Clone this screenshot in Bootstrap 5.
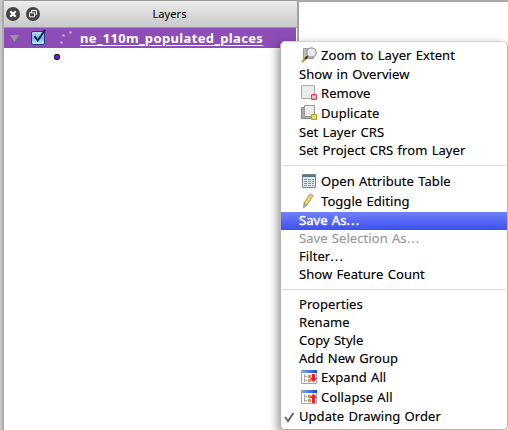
<!DOCTYPE html>
<html lang="en">
<head>
<meta charset="utf-8">
<meta name="viewport" content="width=device-width, initial-scale=1">
<title>Layers</title>
<link href="https://cdn.jsdelivr.net/npm/bootstrap@5.3.0/dist/css/bootstrap.min.css" rel="stylesheet">
<style>
body{width:508px;height:430px;font:13px/18px "Noto Sans","Open Sans",sans-serif;color:#000;background:#fff}
.edge{width:4px;background:linear-gradient(90deg,#c6c6c6 2px,#acacac 2px)}
.layers{width:295px;border-right:2px solid #a2a2a2}
.layers-head{height:28px;border-top:1px solid #999;border-bottom:1px solid #999;background:linear-gradient(#ececec,#c9c9c9);font-size:11.2px}
.head-tools{width:42px;padding-left:2px;gap:6px}
.head-title{padding-right:4px}
.layer-row{height:20px;width:292px;background:#8d4db7;color:#fff;font-weight:700;padding-left:4px}
.layer-row span{letter-spacing:.37px;line-height:17px;text-decoration:underline;text-underline-offset:2px;text-decoration-thickness:1px}
.top-rule{border-top:2px solid #aaa}
.ctx{left:280px;top:41px;width:228px;height:389px;background:#fff;border:1px solid #b4b4b4;border-top-color:#d6d6d6;border-radius:5px;box-shadow:-3px 3px 9px rgba(0,0,0,.38);padding:4px 0}
.item{height:18px;padding-left:18px;line-height:17px;letter-spacing:.06px;word-spacing:.8px;-webkit-text-stroke:.15px}
.item svg{width:18px;height:18px;margin-right:4px;flex:none}
.with-icon{height:20px;line-height:19px}
.dots{letter-spacing:1.1px}
.chosen{background:linear-gradient(#7181f8,#3c50f0);color:#fff;-webkit-text-stroke:.4px #fff}
.dimmed{color:#999}
.rule{height:12px;padding:5px 1px 0}
.rule div{height:1px;background:#dcdcdc}
.checked{padding-left:1px}
.checked svg{margin-right:-1px}
</style>
</head>
<body class="position-relative overflow-hidden">
<svg width="0" height="0" class="position-absolute"><defs>
<linearGradient id="blue" x2="0" y2="1"><stop stop-color="#c3daf4"/><stop offset=".5" stop-color="#76b1ec"/><stop offset="1" stop-color="#b9f2ff"/></linearGradient>
<linearGradient id="bar"><stop stop-color="#7eb0f4"/><stop offset="1" stop-color="#1c48cc"/></linearGradient>
<g id="tree"><path fill="#fff" stroke="#86a8dd" d="M2.500 3.500h15v12h-15z"/><path fill="url(#bar)" d="M2 2h16v3H2z"/><path stroke="#aaa" fill="none" d="M5.500 6v8M6 8.500h2M6 12.500h2"/><path fill="#f08b2c" d="M9 7h3v3H9zM9 11h3v3H9z"/></g>
</defs></svg>
<div class="d-flex h-100">
<div class="edge h-100"></div>
<section class="layers h-100">
<header class="layers-head d-flex align-items-center">
<div class="head-tools d-flex">
<svg width="14" height="14" viewBox="0 0 14 14"><circle cx="7" cy="7" r="7" fill="#444"/><path d="M4.300 4.300l5.400 5.400M9.700 4.300l-5.400 5.400" stroke="#fff" stroke-width="2.300"/></svg>
<svg width="14" height="14" viewBox="0 0 14 14"><circle cx="7" cy="7" r="7" fill="#444"/><path d="M5.500 5.500v-2h5v4H9M3.500 5.800h5v4h-5z" fill="none" stroke="#fff"/></svg>
</div>
<div class="head-title flex-fill text-center">Layers</div>
</header>
<div class="layer-row d-flex align-items-center">
<svg width="72" height="20" viewBox="0 0 72 20" class="flex-shrink-0"><path fill="#969696" d="M2 7h9l-4.500 7z"/><rect x="23.500" y="3.500" width="13" height="13" rx="1.500" fill="url(#blue)" stroke="#243d74"/><path d="M26.500 8l3.200 4.500L37 2" fill="none" stroke="#122340" stroke-width="2"/><g fill="#c4b6c8"><circle cx="55.500" cy="7.500" r="1.200"/><circle cx="62.500" cy="4.500" r="1.200"/><circle cx="53.500" cy="14.500" r="1.200"/></g></svg>
<span>ne_110m_populated_places</span>
</div>
<svg width="100" height="20" class="d-block"><circle cx="53" cy="9" r="2.700" fill="#681dd2" stroke="#180630"/></svg>
</section>
<div class="top-rule flex-fill"></div>
</div>
<nav class="ctx position-absolute text-nowrap">
<div class="item with-icon d-flex"><svg viewBox="0 0 18 18"><path fill="#bbb" stroke="#999" d="M4.500 2.500h10v10h-10z"/><path d="M3 16l5-5" stroke="#c9a338" stroke-width="2.500"/><path d="M6 13l3-3" stroke="#333" stroke-width="2"/><circle cx="12.500" cy="6.500" r="4.700" fill="#e9eaec" stroke="#999" stroke-width="1.300"/></svg><span>Zoom to Layer Extent</span></div>
<div class="item"><span>Show in Overview</span></div>
<div class="item with-icon d-flex"><svg viewBox="0 0 18 18"><path fill="#ebebea" stroke="#aaa" d="M2.500 1.500h13v13h-13z"/><rect x="12.500" y="10.500" width="5" height="5" rx=".5" fill="#f28a90" stroke="#e2434d"/><path stroke="#fff" d="M13 13h4"/></svg><span>Remove</span></div>
<div class="item with-icon d-flex"><svg viewBox="0 0 18 18"><path fill="#aaa" stroke="#888" d="M2.500 3.500h11v11h-11z"/><path fill="#ebebea" stroke="#999" d="M5.500 1.500h10v11h-10z"/><path fill="#efd954" stroke="#b99a22" d="M12.500 10.500h5v5h-5z"/></svg><span>Duplicate</span></div>
<div class="item"><span>Set Layer CRS</span></div>
<div class="item"><span>Set Project CRS from Layer</span></div>
<div class="rule"><div></div></div>
<div class="item with-icon d-flex"><svg viewBox="0 0 18 18"><path fill="#e6edf0" stroke="#71818e" d="M3.500 2.500h13v13h-13z"/><path fill="#4d7799" d="M4 3h12v2H4z"/><path stroke="#7c91a1" d="M5 7.500h3M9 7.500h3M13 7.500h2M5 9.500h3M9 9.500h3M13 9.500h2M5 11.500h3M9 11.500h3M13 11.500h2M5 13.500h3M9 13.500h3M13 13.500h2"/></svg><span>Open Attribute Table</span></div>
<div class="item with-icon d-flex"><svg viewBox="0 0 18 18"><path fill="#e5cd50" stroke="#a28b37" stroke-width=".7" d="M5 11l5.500-8.500 3.500 1.500-6 9z"/><path d="M6.500 11.500l5.500-8" stroke="#f5e891"/><path fill="#bbb5a8" stroke="#888" stroke-width=".7" d="M5 11l3 2-3.500 3z"/><path stroke="#bbb" stroke-width="2" d="M10.500 2l4 2"/></svg><span>Toggle Editing</span></div>
<div class="item chosen"><span>Save As<span class="dots">...</span></span></div>
<div class="item dimmed"><span>Save Selection As<span class="dots">...</span></span></div>
<div class="item"><span>Filter<span class="dots">...</span></span></div>
<div class="item"><span>Show Feature Count</span></div>
<div class="rule"><div></div></div>
<div class="item"><span>Properties</span></div>
<div class="item"><span>Rename</span></div>
<div class="item"><span>Copy Style</span></div>
<div class="item"><span>Add New Group</span></div>
<div class="item with-icon d-flex"><svg viewBox="0 0 18 18"><use href="#tree"/><path fill="#ec1f30" d="M13 6h3v4h2l-3.500 4.500L11 10h2z"/></svg><span>Expand All</span></div>
<div class="item with-icon d-flex"><svg viewBox="0 0 18 18"><use href="#tree"/><path fill="#ec1f30" d="M13 15h3v-5h2l-3.500-4.500L11 10h2z"/></svg><span>Collapse All</span></div>
<div class="item checked d-flex"><svg viewBox="0 0 18 18"><path d="M3 9l3 4L11.500 5" fill="none" stroke="#666" stroke-width="2"/></svg><span>Update Drawing Order</span></div>
</nav>
</body>
</html>
